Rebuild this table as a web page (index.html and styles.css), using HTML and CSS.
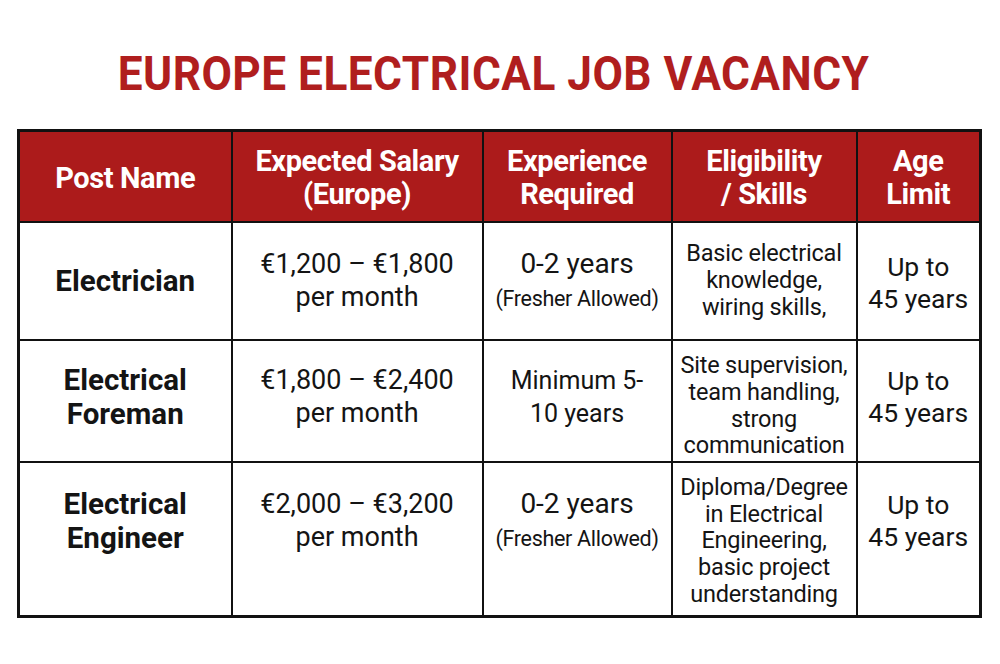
FILE: index.html
```html
<!DOCTYPE html>
<html lang="en">
<head>
<meta charset="utf-8">
<title>Europe Electrical Job Vacancy</title>
<link rel="stylesheet" href="styles.css">
</head>
<body>
<main class="page">
  <h1 class="title">EUROPE ELECTRICAL JOB VACANCY</h1>
  <table class="jobs">
    <colgroup>
      <col class="c1"><col class="c2"><col class="c3"><col class="c4"><col class="c5">
    </colgroup>
    <thead>
      <tr>
        <th>Post Name</th>
        <th>Expected Salary<br>(Europe)</th>
        <th>Experience<br>Required</th>
        <th>Eligibility<br>/ Skills</th>
        <th>Age<br>Limit</th>
      </tr>
    </thead>
    <tbody>
      <tr class="r1">
        <td class="post">Electrician</td>
        <td class="main">€1,200 – €1,800<br>per month</td>
        <td class="main exp">0-2 years<br><span class="note">(Fresher Allowed)</span></td>
        <td class="skills">Basic electrical<br>knowledge,<br>wiring skills,</td>
        <td class="main age">Up to<br>45 years</td>
      </tr>
      <tr class="r2">
        <td class="post">Electrical<br>Foreman</td>
        <td class="main">€1,800 – €2,400<br>per month</td>
        <td class="main min">Minimum 5-<br>10 years</td>
        <td class="skills">Site supervision,<br>team handling,<br>strong<br>communication</td>
        <td class="main age">Up to<br>45 years</td>
      </tr>
      <tr class="r3">
        <td class="post">Electrical<br>Engineer</td>
        <td class="main">€2,000 – €3,200<br>per month</td>
        <td class="main exp">0-2 years<br><span class="note">(Fresher Allowed)</span></td>
        <td class="skills">Diploma/Degree<br>in Electrical<br>Engineering,<br>basic project<br>understanding</td>
        <td class="main age">Up to<br>45 years</td>
      </tr>
    </tbody>
  </table>
</main>
</body>
</html>
```
FILE: styles.css
```css
html, body {
  margin: 0;
  padding: 0;
  background: #ffffff;
}

.page {
  width: 1000px;
  height: 664px;
  padding-top: 50px;
  box-sizing: border-box;
  font-family: Roboto, "Liberation Sans", sans-serif;
  color: #141414;
}

.title {
  margin: 0 0 31px 0;
  text-align: center;
  font-family: Roboto, "Liberation Sans", sans-serif;
  font-weight: 700;
  font-size: 48px;
  line-height: 48px;
  letter-spacing: 0.5px;
  color: #b01e1e;
  transform: scaleX(0.921);
  padding-right: 14px;
}

.jobs {
  margin-left: 17px;
  width: 962px;
  height: 487px;
  table-layout: fixed;
  border-collapse: collapse;
  border: 3px solid #111111;
}

.c1 { width: 213px; }
.c2 { width: 251px; }
.c3 { width: 189px; }
.c4 { width: 185px; }
.c5 { width: 124px; }

.jobs th,
.jobs td {
  box-sizing: border-box;
  border: 2.5px solid #111111;
  text-align: center;
  vertical-align: middle;
  padding: 0 2px;
}

.jobs th {
  background: #ac1b1b;
  color: #ffffff;
  font-weight: 700;
  font-size: 29px;
  line-height: 33px;
  letter-spacing: -0.4px;
  height: 91px;
  padding-top: 4px;
}

.r1 td { height: 118px; }
.r2 td { height: 122px; }
.r3 td { height: 155px; }

.post {
  font-weight: 700;
  font-size: 29.5px;
  line-height: 34px;
}

.main {
  font-weight: 400;
  font-size: 27px;
  line-height: 33px;
}

.exp {
  font-size: 28px;
}

.min {
  font-size: 25px;
}

.age {
  font-size: 26.5px;
  line-height: 32px;
}

.r1 .age {
  padding-top: 5px;
}

.note {
  font-size: 21.5px;
  letter-spacing: -0.3px;
}

.skills {
  font-size: 23.5px;
  line-height: 26.7px;
  letter-spacing: -0.2px;
}

.r2 .post,
.r2 .main {
  padding-bottom: 7px;
}

.r2 .skills {
  padding-top: 10px;
}

.r3 .skills {
  padding-top: 4px;
}

.r3 .post,
.r3 .main {
  padding-bottom: 36px;
}
```
